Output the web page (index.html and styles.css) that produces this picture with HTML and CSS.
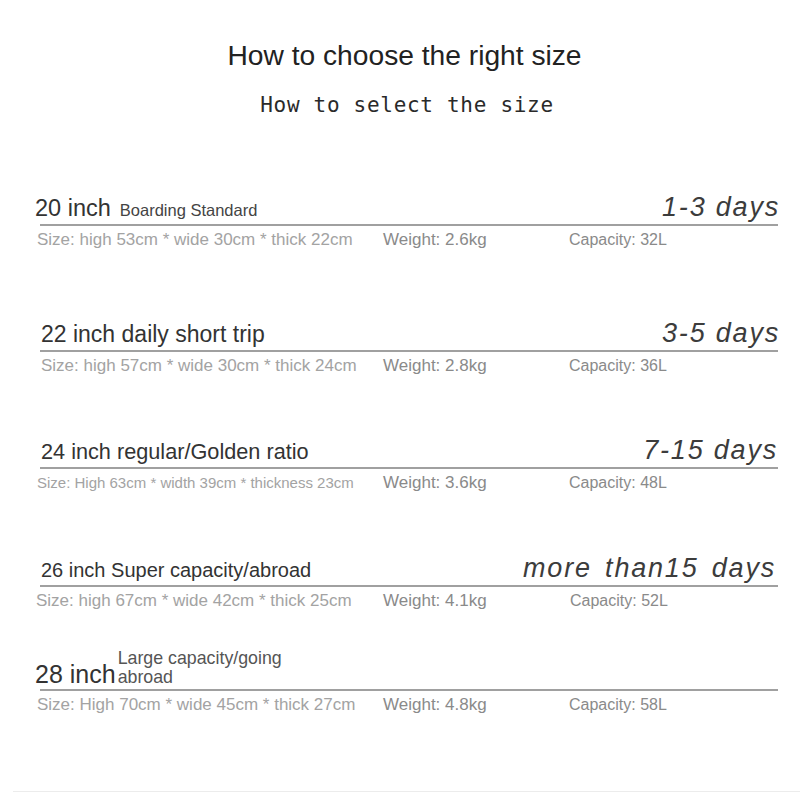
FILE: index.html
```html
<!DOCTYPE html>
<html lang="en">
<head>
<meta charset="utf-8">
<title>How to choose the right size</title>
<link rel="stylesheet" href="styles.css">
</head>
<body>
<div class="page">
  <h1 class="title">How to choose the right size</h1>
  <h2 class="subtitle">How to select the size</h2>

  <section class="sec s1">
    <div class="head">
      <div class="name n-wide"><span class="inch i1">20 inch</span><span class="tag">Boarding Standard</span></div>
      <div class="days">1-3 days</div>
    </div>
    <div class="rule"></div>
    <div class="details">
      <span class="size">Size: high 53cm * wide 30cm * thick 22cm</span>
      <span class="weight">Weight: 2.6kg</span>
      <span class="cap">Capacity: 32L</span>
    </div>
  </section>

  <section class="sec s2">
    <div class="head">
      <div class="name n-in"><span class="inch i2">22 inch daily short trip</span></div>
      <div class="days">3-5 days</div>
    </div>
    <div class="rule"></div>
    <div class="details d-in">
      <span class="size">Size: high 57cm * wide 30cm * thick 24cm</span>
      <span class="weight">Weight: 2.8kg</span>
      <span class="cap">Capacity: 36L</span>
    </div>
  </section>

  <section class="sec s3">
    <div class="head">
      <div class="name n-in"><span class="inch i3">24 inch regular/Golden ratio</span></div>
      <div class="days days-3">7-15 days</div>
    </div>
    <div class="rule"></div>
    <div class="details">
      <span class="size size-sm">Size: High 63cm * width 39cm * thickness 23cm</span>
      <span class="weight">Weight: 3.6kg</span>
      <span class="cap">Capacity: 48L</span>
    </div>
  </section>

  <section class="sec s4">
    <div class="head">
      <div class="name n-in"><span class="inch i4">26 inch Super capacity/abroad</span></div>
      <div class="days days-long">more than15 days</div>
    </div>
    <div class="rule"></div>
    <div class="details d-4">
      <span class="size">Size: high 67cm * wide 42cm * thick 25cm</span>
      <span class="weight">Weight: 4.1kg</span>
      <span class="cap">Capacity: 52L</span>
    </div>
  </section>

  <section class="sec s5">
    <div class="head">
      <div class="name n-wide n-last"><span class="inch i5">28 inch</span><span class="tag tag-wrap">Large capacity/going abroad</span></div>
    </div>
    <div class="rule"></div>
    <div class="details">
      <span class="size">Size: High 70cm * wide 45cm * thick 27cm</span>
      <span class="weight">Weight: 4.8kg</span>
      <span class="cap">Capacity: 58L</span>
    </div>
  </section>

  <div class="footline"></div>
</div>
</body>
</html>
```

FILE: styles.css
```css
html, body {
  margin: 0;
  padding: 0;
  background: #ffffff;
}

.page {
  width: 800px;
  height: 800px;
  overflow: hidden;
  padding-top: 41px;
  box-sizing: border-box;
  font-family: "Liberation Sans", Arial, sans-serif;
}

.title {
  margin: 0 0 0 9px;
  font-size: 28.2px;
  line-height: 28px;
  font-weight: normal;
  color: #222;
  text-align: center;
}

.subtitle {
  margin: 23px 0 0 14px;
  font-family: "DejaVu Sans Mono", "Liberation Mono", monospace;
  font-size: 21px;
  line-height: 26px;
  font-weight: normal;
  color: #2a2a2a;
  text-align: center;
  letter-spacing: 0.7px;
}

.sec {
  width: 780px;
}

.s1 { margin-top: 74px; }
.s2 { margin-top: 68px; }
.s3 { margin-top: 59px; }
.s4 { margin-top: 60px; }
.s5 { margin-top: 38px; }

.head {
  display: flex;
  justify-content: space-between;
  align-items: baseline;
  padding-bottom: 2px;
}

.name {
  display: flex;
  align-items: baseline;
}

.n-last {
  align-items: last baseline;
}

.n-wide { padding-left: 35px; }
.n-in { padding-left: 41px; }

.inch {
  font-size: 22px;
  line-height: 26px;
  color: #333;
}

.i1 { font-size: 23.5px; }
.i2 { font-size: 23px; }
.i3 { font-size: 21.7px; }
.i4 { font-size: 20px; }
.i5 { font-size: 25px; }

.tag {
  margin-left: 9px;
  font-size: 16.5px;
  line-height: 20px;
  color: #444;
}

.tag-wrap {
  display: inline-block;
  margin-left: 2px;
  width: 185px;
  font-size: 17.8px;
  line-height: 19px;
  color: #555;
}

.days {
  font-size: 27px;
  line-height: 30px;
  font-style: italic;
  color: #3c3c3c;
  letter-spacing: 1.8px;
}

.days-3 {
  margin-right: 2px;
}

.days-long {
  word-spacing: 4px;
  margin-right: 4px;
}

.rule {
  margin-left: 40px;
  width: 738px;
  height: 2px;
  background: #a0a0a0;
}

.details {
  display: grid;
  grid-template-columns: 346px 186px auto;
  margin-top: 4px;
  padding-left: 37px;
  font-size: 17px;
  line-height: 20px;
}

.d-in {
  padding-left: 41px;
  grid-template-columns: 342px 186px auto;
}

.d-4 {
  padding-left: 36px;
  grid-template-columns: 347px 187px auto;
}

.size {
  color: #a3a3a3;
  white-space: nowrap;
}

.size-sm {
  font-size: 15px;
}

.weight {
  color: #8a8a8a;
}

.cap {
  color: #8a8a8a;
  font-size: 16px;
}

.footline {
  margin: 76px 0 0 13px;
  height: 1px;
  background: #ececec;
}
```
